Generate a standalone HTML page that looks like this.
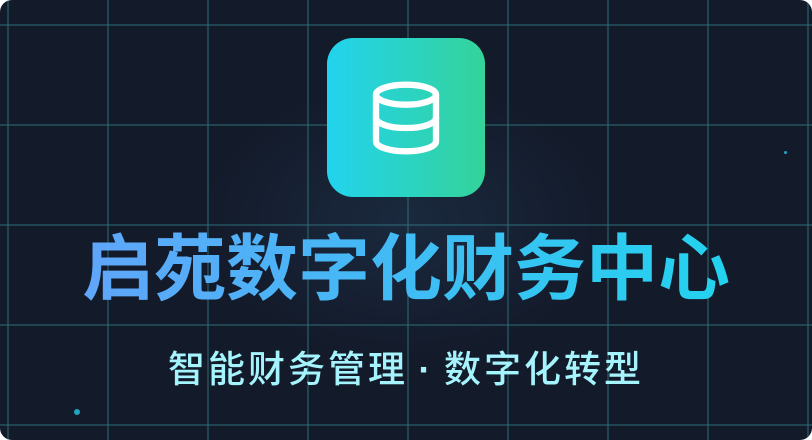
<!DOCTYPE html>
<html><head><meta charset="utf-8"><style>
html,body{margin:0;padding:0;background:#fff;}
.card{position:relative;width:812px;height:440px;border-radius:12px;overflow:hidden;background:#131a2a;
background-image:radial-gradient(ellipse 300px 200px at 406px 220px,rgba(40,70,100,.35),transparent 70%);}
.grid{position:absolute;inset:0;
background-image:linear-gradient(rgba(45,110,120,.5) 2px,transparent 2px),linear-gradient(90deg,rgba(45,110,120,.5) 2px,transparent 2px);
background-size:100px 100px;background-position:7px 24px;}
.icon{position:absolute;left:327px;top:38px;width:158px;height:159px;border-radius:26px;background:linear-gradient(90deg,#22d3ee,#34d399);}
.icon svg{position:absolute;left:39px;top:40px;}
.t{position:absolute;left:0;width:812px;text-align:center;font-family:"Liberation Sans","Noto Sans CJK SC",sans-serif;}
.title{top:222px;font-size:72px;font-weight:bold;line-height:96px;}
.title span{background:linear-gradient(90deg,#60a5fa,#22d3ee);-webkit-background-clip:text;background-clip:text;color:transparent;}
.sub{top:344px;font-size:37px;line-height:52px;color:#a5f3fc;font-weight:500;letter-spacing:3px;}
.sub b{display:inline-block;width:36px;font-weight:bold;}
.dot{position:absolute;border-radius:50%;background:#22a5c0;}
</style></head><body>
<div class="card">
<div class="grid"></div>
<div class="icon"><svg width="80" height="80" viewBox="0 0 24 24" fill="none" stroke="#fff" stroke-width="1.9" stroke-linecap="round" stroke-linejoin="round"><ellipse cx="12" cy="5" rx="9" ry="3"/><path d="M3 5v14c0 1.66 4 3 9 3s9-1.34 9-3V5"/><path d="M3 12c0 1.66 4 3 9 3s9-1.34 9-3"/></svg></div>
<div class="t title"><span>启苑数字化财务中心</span></div>
<div class="t sub">智能财务管理<b>·</b>数字化转型</div>
<div class="dot" style="left:74px;top:409px;width:6px;height:6px"></div>
<div class="dot" style="left:784px;top:151px;width:3px;height:3px"></div>
</div>
</body></html>
